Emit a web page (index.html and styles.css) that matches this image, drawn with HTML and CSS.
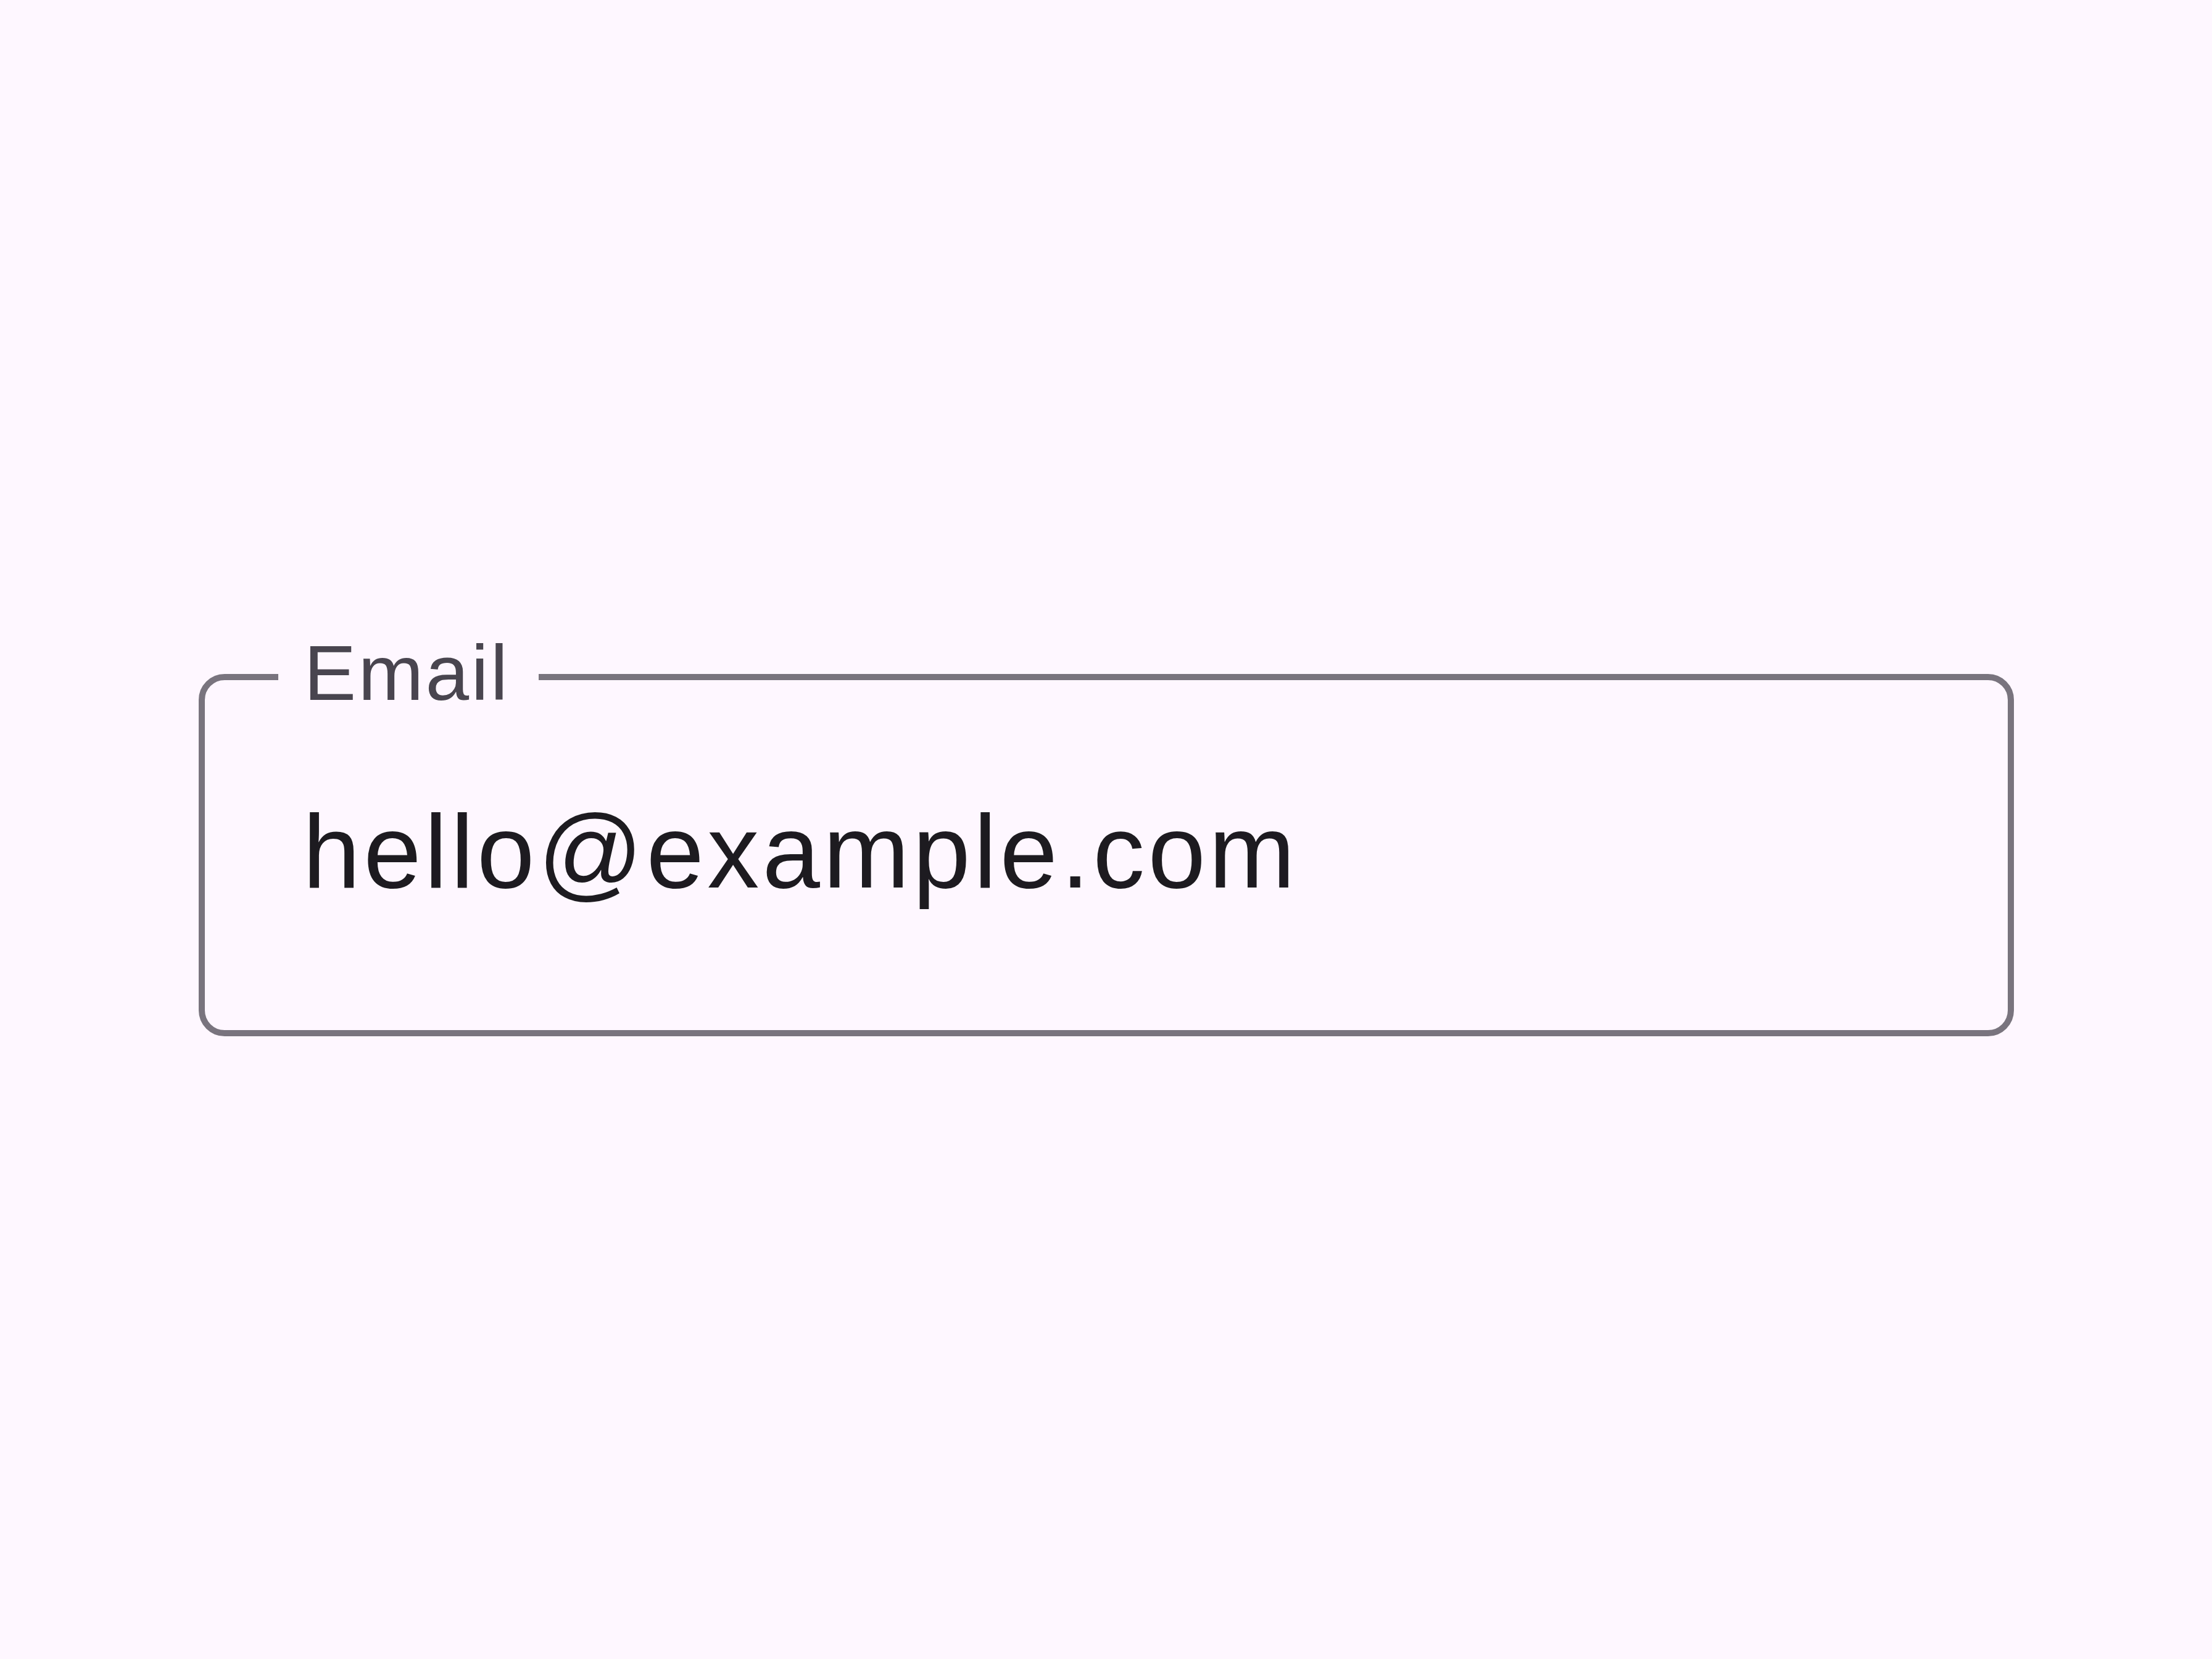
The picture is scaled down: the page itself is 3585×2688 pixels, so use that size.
FILE: index.html
```html
<!DOCTYPE html>
<html lang="en">
<head>
<meta charset="utf-8">
<title>Email field</title>
<link rel="stylesheet" href="styles.css">
</head>
<body>
<main class="stage">
  <div class="field">
    <span class="field-label">Email</span>
    <div class="field-value">hello@example.com</div>
  </div>
</main>
</body>
</html>
```
FILE: styles.css
```css
html, body {
  margin: 0;
  padding: 0;
  background: #FEF7FF;
}
.stage {
  width: 3585px;
  height: 2688px;
  display: flex;
  justify-content: center;
  align-items: flex-start;
  padding-top: 1092px;
  box-sizing: border-box;
}
.field {
  position: relative;
  width: 2942px;
  height: 587px;
  box-sizing: border-box;
  border: 10px solid #79747E;
  border-radius: 42px;
  padding: 152px 0 0 159px;
  font-family: "Liberation Sans", Arial, sans-serif;
}
.field-label {
  position: absolute;
  left: 119px;
  top: -96px;
  padding: 0 47px 0 42px;
  background: #FEF7FF;
  color: #49454F;
  font-size: 127px;
  line-height: 168px;
  letter-spacing: 3.25px;
  white-space: nowrap;
}
.field-value {
  color: #1D1B20;
  font-size: 168px;
  line-height: 252px;
  letter-spacing: 5.25px;
  white-space: nowrap;
}
```
